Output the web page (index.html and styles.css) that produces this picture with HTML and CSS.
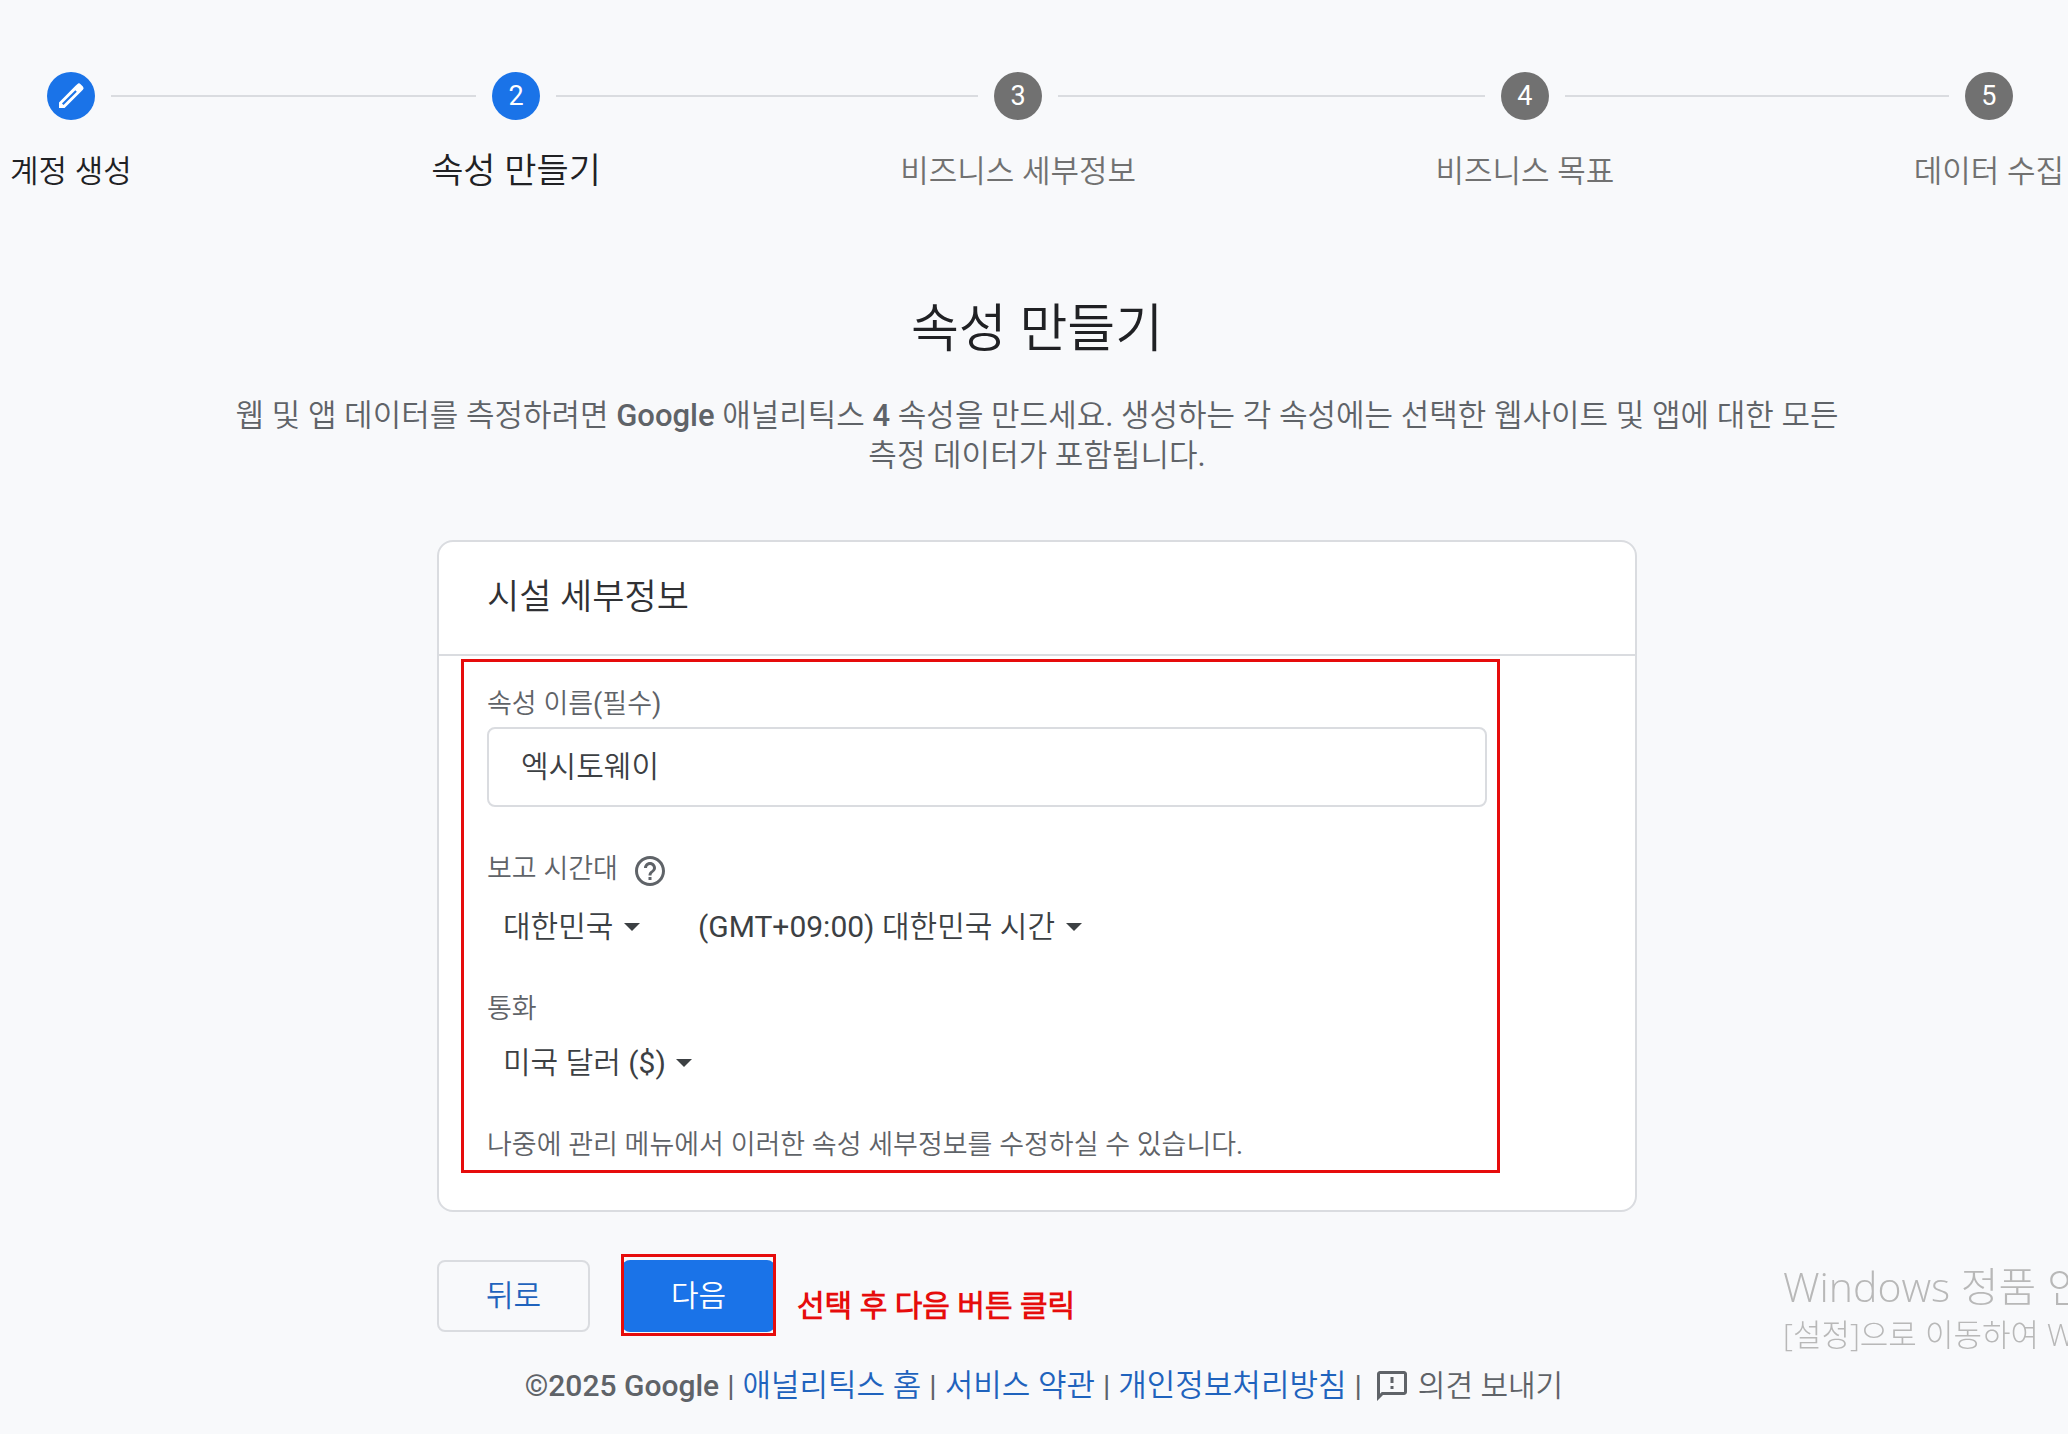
FILE: index.html
```html
<!DOCTYPE html>
<html lang="ko">
<head>
    <meta charset="UTF-8">
    <meta name="viewport" content="width=device-width, initial-scale=1.0">
    <title>애널리틱스 | 속성 만들기</title>
    <link rel="stylesheet" href="styles.css">
</head>
<body>
    <ol class="stepper">
        <li class="step done">
            <div class="step-track">
                <span class="step-circle">
                    <svg viewBox="0 0 24 24" width="32" height="32"><path fill="#fff" d="M3 16.8V21h4.2L19.6 8.6l-4.2-4.2L3 16.8zM20.9 7.3a1.8 1.8 0 0 0 0-2.5l-1.7-1.7a1.8 1.8 0 0 0-2.5 0l-1.3 1.3 4.2 4.2 1.3-1.3z"/><path fill="none" stroke="#1a73e8" stroke-width="1.6" d="M5.8 18.2 15.8 8.2"/></svg>
                </span>
            </div>
            <span class="step-label">계정 생성</span>
        </li>
        <li class="step-line"></li>
        <li class="step active">
            <div class="step-track"><span class="step-circle">2</span></div>
            <span class="step-label">속성 만들기</span>
        </li>
        <li class="step-line"></li>
        <li class="step">
            <div class="step-track"><span class="step-circle">3</span></div>
            <span class="step-label">비즈니스 세부정보</span>
        </li>
        <li class="step-line"></li>
        <li class="step">
            <div class="step-track"><span class="step-circle">4</span></div>
            <span class="step-label">비즈니스 목표</span>
        </li>
        <li class="step-line"></li>
        <li class="step">
            <div class="step-track"><span class="step-circle">5</span></div>
            <span class="step-label">데이터 수집</span>
        </li>
    </ol>

    <main class="content">
        <h1>속성 만들기</h1>
        <p class="intro">웹 및 앱 데이터를 측정하려면 <span class="latin">Google</span> 애널리틱스 <span class="latin">4</span> 속성을 만드세요. 생성하는 각 속성에는 선택한 웹사이트 및 앱에 대한 모든 측정 데이터가 포함됩니다.</p>

        <form class="form">
            <section class="card">
                <h2>시설 세부정보</h2>
                <div class="card-body">
                    <label class="label" for="propertyName">속성 이름(필수)</label>
                    <input class="text-input" id="propertyName" type="text" value="엑시토웨이">

                    <div class="label-row">
                        <label class="label" for="country">보고 시간대</label>
                        <button class="help" type="button" aria-label="도움말">
                            <svg viewBox="0 0 24 24" width="36" height="36" fill="#5f6368"><path d="M11 18h2v-2h-2v2zm1-16C6.48 2 2 6.48 2 12s4.48 10 10 10 10-4.48 10-10S17.52 2 12 2zm0 18c-4.41 0-8-3.59-8-8s3.59-8 8-8 8 3.59 8 8-3.59 8-8 8zm0-14c-2.21 0-4 1.79-4 4h2c0-1.1.9-2 2-2s2 .9 2 2c0 2-3 1.75-3 5h2c0-2.25 3-2.5 3-5 0-2.21-1.79-4-4-4z"/></svg>
                        </button>
                    </div>
                    <div class="select-row">
                        <span class="select">
                            <select id="country"><option>대한민국</option></select>
                        </span>
                        <span class="select">
                            <select id="timezone" aria-label="시간대"><option>(GMT+09:00) 대한민국 시간</option></select>
                        </span>
                    </div>

                    <label class="label" for="currency">통화</label>
                    <div class="select-row">
                        <span class="select">
                            <select id="currency"><option>미국 달러 ($)</option></select>
                        </span>
                    </div>

                    <p class="hint">나중에 관리 메뉴에서 이러한 속성 세부정보를 수정하실 수 있습니다.</p>
                </div>
                <div class="highlight"></div>
            </section>

            <div class="actions">
                <button class="btn" type="button">뒤로</button>
                <div class="next">
                    <button class="btn btn-primary" type="button">다음</button>
                </div>
                <strong class="note">선택 후 다음 버튼 클릭</strong>
            </div>
        </form>
    </main>

    <footer class="footer">
        <span class="latin">©2025 Google</span>
        <span>|</span>
        <a href="#home">애널리틱스 홈</a>
        <span>|</span>
        <a href="#terms">서비스 약관</a>
        <span>|</span>
        <a href="#privacy">개인정보처리방침</a>
        <span>|</span>
        <button class="feedback" type="button">
            <svg viewBox="0 0 24 24" width="36" height="36" fill="#5f6368"><path d="M20 2H4c-1.1 0-2 .9-2 2v18l4-4h14c1.1 0 2-.9 2-2V4c0-1.1-.9-2-2-2zm0 14H5.17L4 17.17V4h16v12zM11 6h2v4h-2zm0 6h2v2h-2z"/></svg>
            의견 보내기
        </button>
    </footer>

    <div class="watermark">
        <div class="watermark-title">Windows 정품 인</div>
        <div>[설정]으로 이동하여 W</div>
    </div>
</body>
</html>
```

FILE: styles.css
```css
* {
    box-sizing: border-box;
}
body {
    margin: 0;
    min-height: 100vh;
    background-color: #f8f9fb;
    font-family: Roboto, "Noto Sans CJK KR DemiLight", "Noto Sans CJK KR", sans-serif;
    font-size: 30px;
    color: #5f6368;
    overflow-x: hidden;
}
button, input, select {
    font: inherit;
    color: inherit;
}

/* Stepper */
.stepper {
    display: flex;
    margin: 0;
    padding: 72px 4px 0 10px;
    list-style: none;
}
.step {
    color: #717171;
    text-align: center;
    white-space: nowrap;
}
.step-track {
    display: flex;
    align-items: center;
    gap: 16px;
    height: 48px;
}
.step-track::before, .step-track::after {
    content: "";
    flex: 1;
    height: 2px;
    background-color: #dadce0;
}
.step:first-child .step-track::before, .step:last-child .step-track::after {
    background-color: transparent;
}
.step-line {
    flex: 1;
    height: 2px;
    margin-top: 23px;
    background-color: #dadce0;
}
.step-circle {
    display: flex;
    align-items: center;
    justify-content: center;
    width: 48px;
    height: 48px;
    border-radius: 50%;
    background-color: #717171;
    color: #fff;
    font-size: 27px;
}
.done .step-circle, .active .step-circle {
    background-color: #1a73e8;
}
.step-label {
    display: block;
    margin-top: 30px;
    font-size: 31px;
    line-height: 44px;
}
.done, .active {
    color: #202124;
}
.active .step-label {
    font-size: 35px;
}

/* Intro */
.content {
    padding: 0 24px 0 30px;
}
h1 {
    margin: 96px 0 0;
    color: #202124;
    font-size: 52px;
    font-weight: 400;
    line-height: 80px;
    text-align: center;
}
.intro {
    max-width: 1620px;
    margin: 26px auto 0;
    font-size: 31px;
    line-height: 40px;
    text-align: center;
    word-break: keep-all;
}
.latin {
    font-weight: 500;
}

/* Card */
.form {
    max-width: 1200px;
    margin: 64px auto 0;
}
.card {
    position: relative;
    border: 2px solid #dadce0;
    border-radius: 16px;
    background-color: #fff;
}
h2 {
    margin: 0;
    padding: 32px 48px;
    border-bottom: 2px solid #dadce0;
    color: #303134;
    font-size: 35px;
    font-weight: 400;
    line-height: 48px;
}
.card-body {
    padding: 32px 148px 49px 48px;
}
.label, .hint {
    display: block;
    margin: 0;
    font-size: 27px;
    line-height: 32px;
}
.text-input {
    width: 100%;
    height: 80px;
    margin: 7px 0 46px;
    padding: 0 32px 6px;
    border: 2px solid #dadce0;
    border-radius: 8px;
    background-color: #fff;
    color: #3c4043;
}
.label-row {
    display: flex;
    align-items: flex-start;
    gap: 14px;
}
.help, .feedback {
    display: flex;
    align-items: center;
    gap: 8px;
    padding: 0;
    border: 0;
    background: none;
}
.select-row {
    display: flex;
    gap: 58px;
    margin: 14px 0 42px;
    padding-left: 16px;
}
.select {
    display: flex;
    align-items: center;
    gap: 10px;
    height: 48px;
}
.select::after {
    content: "";
    border: 8px solid transparent;
    border-top-color: #3c4043;
    border-bottom: 0;
}
.select select {
    appearance: none;
    padding: 0 0 2px;
    border: 0;
    background: none;
    color: #3c4043;
}
.highlight {
    position: absolute;
    top: 117px;
    right: 135px;
    bottom: 37px;
    left: 22px;
    border: 3px solid #e60c0c;
    pointer-events: none;
}

/* Buttons */
.actions {
    display: flex;
    align-items: center;
    margin-top: 48px;
}
.btn {
    width: 153px;
    height: 72px;
    padding: 0 0 6px;
    border: 2px solid #dadce0;
    border-radius: 8px;
    background: none;
    color: #1f63bd;
}
.btn-primary {
    display: block;
    border: 0;
    background-color: #1a73e8;
    color: #fff;
}
.next {
    position: relative;
    margin: 0 22px 0 32px;
}
.next::after {
    content: "";
    position: absolute;
    inset: -6px -1px -4px;
    border: 3px solid #e60c0c;
    pointer-events: none;
}
.note {
    padding-top: 14px;
    color: #e60c0c;
}

/* Footer */
.footer {
    display: flex;
    align-items: center;
    justify-content: center;
    gap: 8px;
    margin-top: 32px;
    padding-left: 20px;
    line-height: 44px;
}
.footer a {
    color: #1f63bd;
    font-size: 31px;
    text-decoration: none;
}
.feedback {
    margin-left: 4px;
}

/* Activation notice */
.watermark {
    position: fixed;
    right: 0;
    bottom: 78px;
    width: 285px;
    overflow: hidden;
    color: #b8b8b8;
    font-family: "Open Sans", "Noto Sans CJK KR", sans-serif;
    font-size: 31px;
    font-weight: 300;
    line-height: 44px;
    white-space: nowrap;
}
.watermark-title {
    font-size: 41px;
    line-height: 52px;
}
```
